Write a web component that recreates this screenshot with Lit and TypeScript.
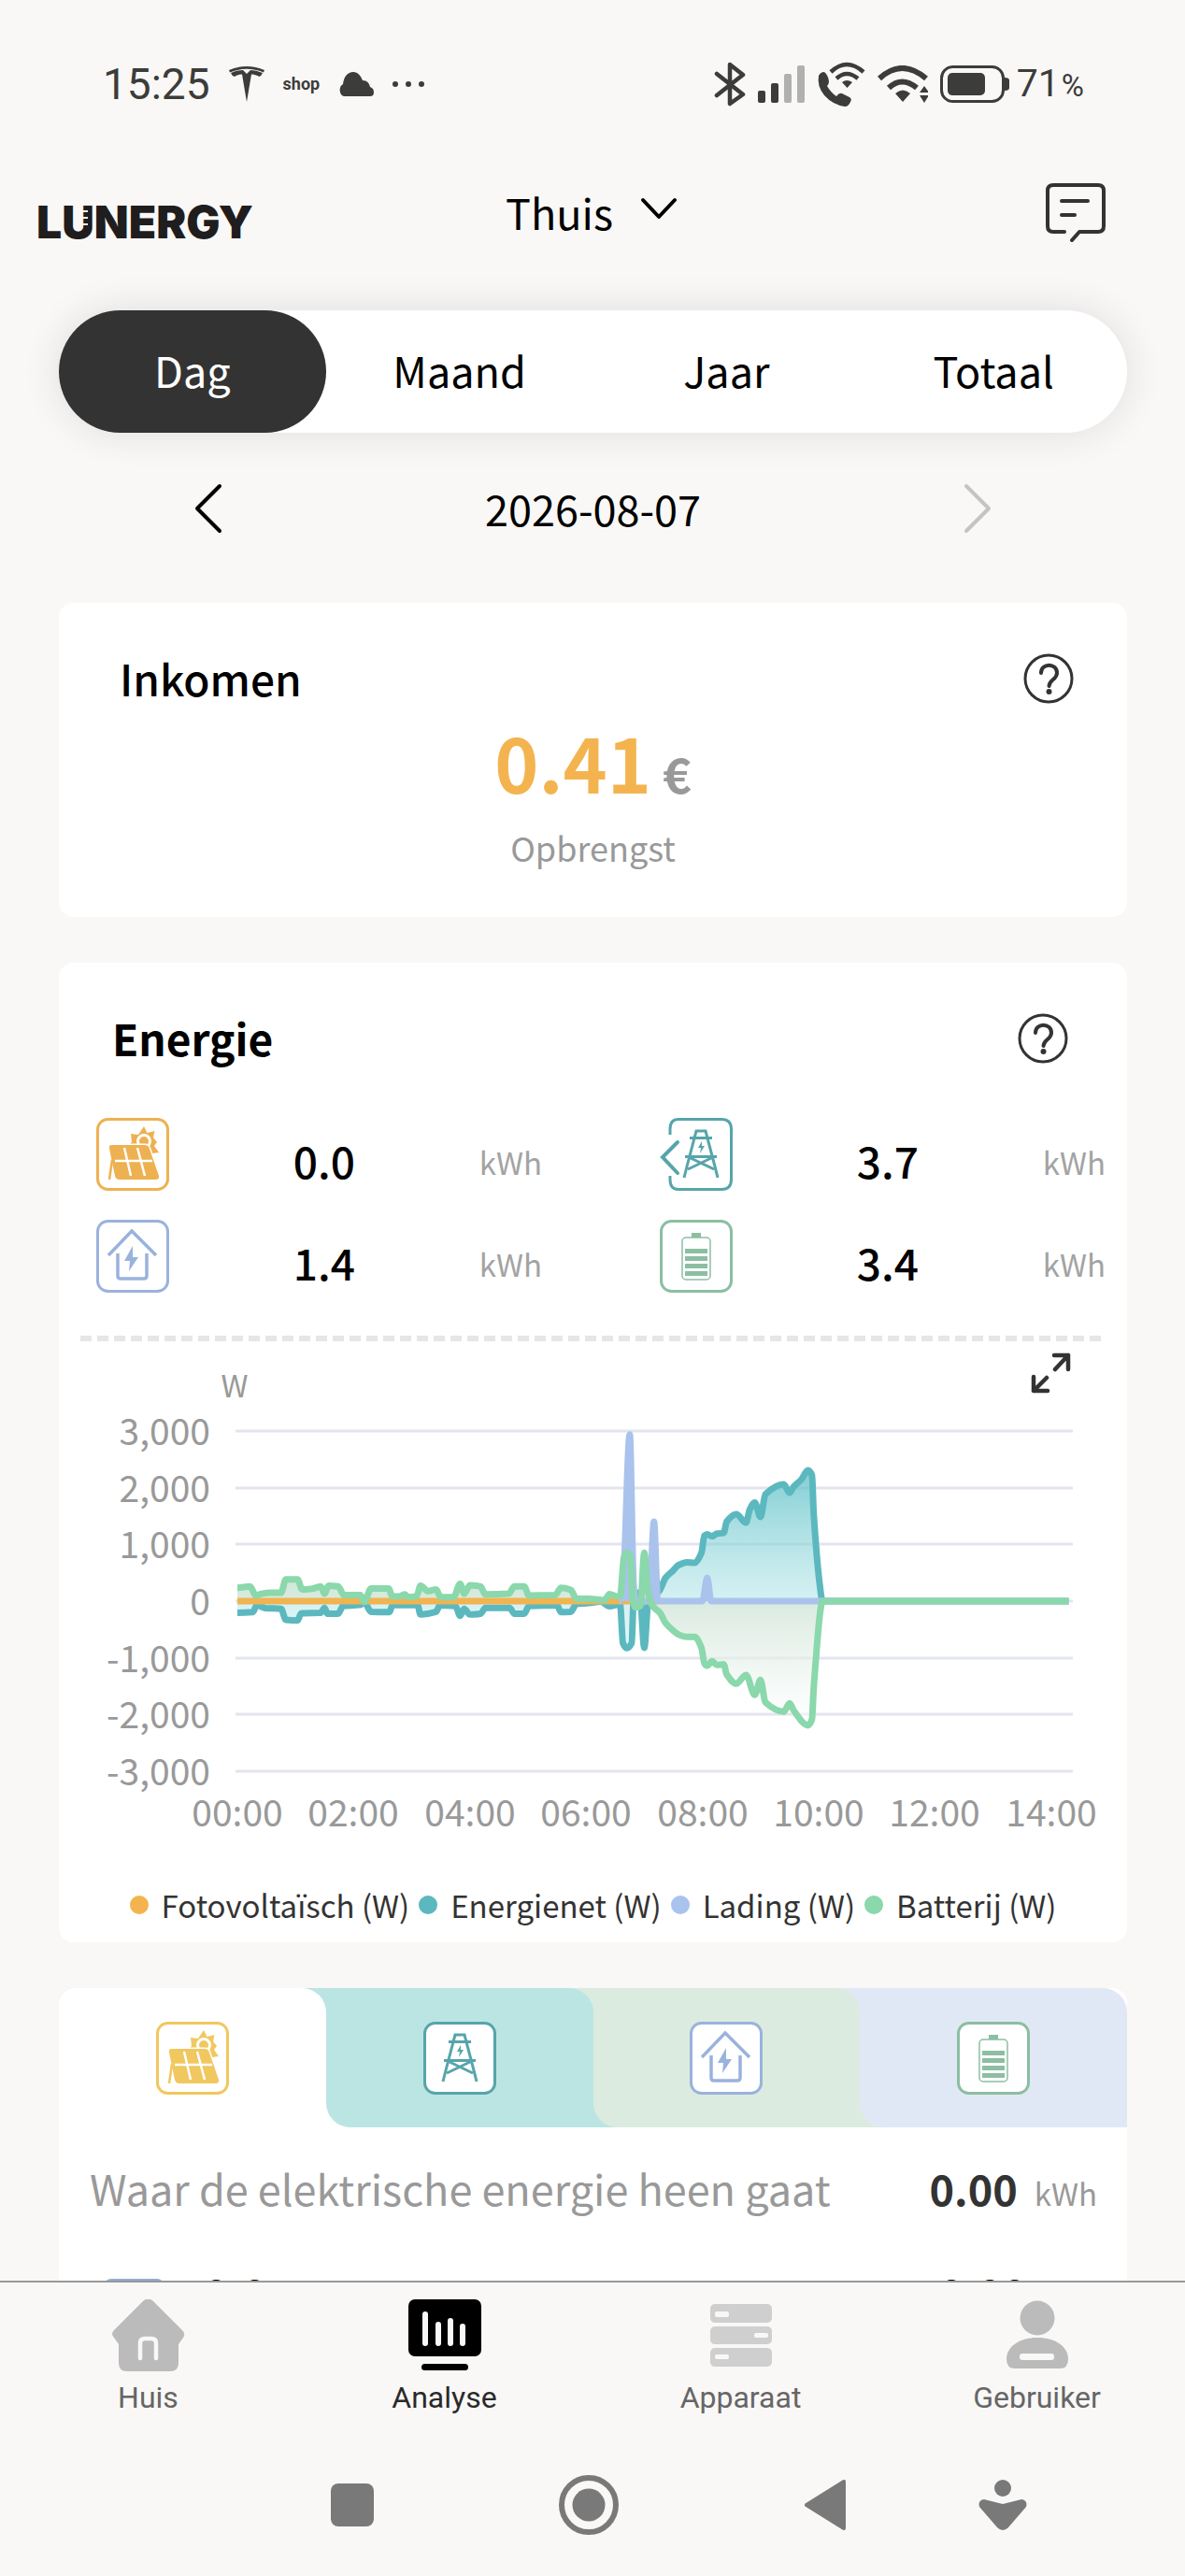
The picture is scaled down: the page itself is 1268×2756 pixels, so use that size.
import { LitElement, html, css, svg } from 'lit';
import { customElement, property, state } from 'lit/decorators.js';
import { classMap } from 'lit/directives/class-map.js';

type Point = [number, number];

// [minutes since midnight, watts]
const PV: Point[] = [[0, 0], [434, 0]];

const GRID: Point[] = [
  [0, -206], [16, -194], [20, -76], [29, -123], [45, -135], [50, -330], [62, -341], [66, -212],
  [86, -206], [90, -118], [93, -223], [104, -223], [109, -88], [127, -65], [131, -18], [138, -188],
  [157, -194], [160, -70], [186, -70], [189, -235], [205, -188], [209, -76], [225, -88], [230, -259],
  [234, -135], [240, -235], [251, -223], [256, -118], [281, -118], [286, -223], [296, -223],
  [301, -88], [330, -76], [334, -194], [344, -188], [350, -47], [363, -35], [375, -10], [384, -93],
  [395, -55], [398, -741], [402, -829], [407, -741], [409, 27], [413, 148], [416, 27], [420, -823],
  [424, -27], [429, 82], [436, 192], [442, 412], [450, 543], [455, 631], [464, 686], [472, 675],
  [479, 851], [482, 1153], [485, 1180], [490, 1142], [495, 1191], [502, 1202], [505, 1400],
  [515, 1532], [525, 1383], [529, 1620], [534, 1740], [540, 1482], [545, 1883], [564, 2059],
  [570, 1910], [574, 2015], [582, 2141], [589, 2306], [593, 2223], [595, 1510], [601, 302],
  [604, 0], [858, 0],
];

const LOAD: Point[] = [
  [394, 0], [398, 300], [405, 2937], [409, 300], [411, 0], [425, 0], [430, 1400], [434, 0],
  [480, 0], [485, 412], [489, 0], [858, 0],
];

const BATTERY: Point[] = [
  [0, 235], [13, 260], [19, 100], [25, 130], [34, 147], [45, 147], [50, 382], [62, 382], [67, 206],
  [77, 218], [86, 258], [90, 130], [94, 270], [104, 258], [110, 106], [127, 106], [131, -15],
  [138, 224], [156, 224], [160, 82], [167, 82], [173, 118], [176, 70], [185, 88], [189, 270],
  [197, 176], [205, 206], [210, 70], [223, 70], [230, 306], [234, 130], [240, 282], [251, 258],
  [256, 118], [280, 130], [286, 258], [296, 258], [301, 100], [328, 106], [334, 235], [344, 200],
  [350, 41], [363, 41], [379, 16], [384, 126], [392, 82], [395, 82], [399, 769], [402, 851],
  [406, 769], [408, 27], [411, -110], [416, -82], [420, 851], [424, 137], [429, -93], [436, -203],
  [442, -384], [450, -522], [455, -587], [464, -631], [472, -631], [479, -823], [482, -1098],
  [485, -1136], [490, -1060], [495, -1125], [502, -1114], [505, -1290], [515, -1455], [525, -1301],
  [534, -1652], [540, -1389], [545, -1784], [564, -1949], [570, -1800], [574, -1921], [589, -2190],
  [593, -2086], [595, -1510], [602, -137], [604, 0], [858, 0],
];

const ZERO_Y = 278;
const toX = (minutes: number) => 191 + minutes * 1.0367;
const toY = (watts: number) => ZERO_Y - watts * 0.0607;

// monotone cubic through the points, so peaks never overshoot
function smoothPath(data: Point[]) {
  const p = data.map(([m, w]) => [toX(m), toY(w)]);
  const slope = (i: number) => (p[i + 1][1] - p[i][1]) / (p[i + 1][0] - p[i][0]);
  const tangent = p.map((_, i) => {
    if (i === 0 || i === p.length - 1) return 0;
    const a = slope(i - 1);
    const b = slope(i);
    return a * b <= 0 ? 0 : (2 * a * b) / (a + b);
  });
  let d = `M${p[0][0].toFixed(1)},${p[0][1].toFixed(1)}`;
  for (let i = 1; i < p.length; i++) {
    const [x0, y0] = p[i - 1];
    const [x1, y1] = p[i];
    const h = (x1 - x0) / 3;
    d += `C${[x0 + h, y0 + tangent[i - 1] * h, x1 - h, y1 - tangent[i] * h, x1, y1]
      .map((n) => n.toFixed(1))
      .join(',')}`;
  }
  return d;
}

function areaPath(data: Point[]) {
  return `${smoothPath(data)}V${ZERO_Y}H${toX(data[0][0])}Z`;
}

const frame = svg`
  <rect x="1.5" y="1.5" width="75" height="75" rx="11" fill="#fff" stroke="currentColor" stroke-width="3"/>`;

const solarIcon = svg`
  ${frame}
  <path fill="currentColor" d="M51 9l3.5 7 8-2-1.500 7 4 5-3 4 5 7-7 1-26-8 4-4-1-9 8 1z"/>
  <circle cx="51" cy="25" r="6.500" fill="currentColor" stroke="#fff" stroke-width="3"/>
  <path fill="currentColor" stroke="#fff" stroke-width="3" paint-order="stroke" d="M17 29h35q4 0 5 4l10 29q1 4-4 4H25q-4 0-5-4l-6-29q-1-4 3-4z"/>
  <path stroke="#fff" stroke-width="2.500" fill="none" d="M20 46h40M30 32l7 30M44 32l8 30"/>
  <path stroke="currentColor" stroke-width="2.500" d="M17 45l-3 21"/>`;

const houseIcon = svg`
  ${frame}
  <path fill="none" stroke="currentColor" stroke-width="3.500" d="M13 38l25-26 26 26M23 36v24q0 3 3 3h25q3 0 3-3V36"/>
  <path fill="currentColor" d="M39 28l-9 16h6l-1 11 10-15h-6z"/>`;

const tower = svg`
  <path fill="none" stroke="currentColor" stroke-width="3" d="M21 64l3-12 10-38h10l10 38 3 12M27 21.500h24M22 41.500h34M28 43l25 12M50 43l-25 12"/>
  <path fill="currentColor" d="M40 25l-4 7h3l-1 6 5-8h-3z"/>`;

const towerIcon = svg`${frame}${tower}`;

const towerFeedIcon = svg`
  <path fill="none" stroke="currentColor" stroke-width="3" d="M11 18v-6q0-10.500 9-10.500h46q10.500 0 10.500 10.500v54q0 10.500-10.500 10.500H20q-9 0-9-10.500v-4"/>
  <path fill="none" stroke="currentColor" stroke-width="4" stroke-linecap="round" d="M19 26L3 42l16 17"/>
  <g transform="translate(5 0)">${tower}</g>`;

const batteryIcon = svg`
  ${frame}
  <rect x="24" y="19" width="30" height="45" rx="4" fill="none" stroke="currentColor" stroke-width="1.500"/>
  <path fill="currentColor" d="M34 14h10v5H34zM27 31h24v5H27zM27 39h24v5H27zM27 47h24v5H27zM27 55h24v5H27z"/>`;

const helpIcon = svg`
  <circle cx="27" cy="27" r="25" fill="none" stroke="#333" stroke-width="3"/>
  <path fill="none" stroke="#333" stroke-width="4" stroke-linecap="round" d="M19 21c0-11 17-11 17 0 0 7-8 7-8.500 14"/>
  <circle cx="27.500" cy="41" r="3" fill="#333"/>`;

@customElement('energy-chart')
export class EnergyChart extends LitElement {
  static styles = css`
    :host {
      display: block;
    }
    svg {
      display: block;
      width: 100%;
      height: auto;
    }
    text {
      font-family: "Noto Sans CJK SC", "Noto Sans", sans-serif;
      font-size: 39px;
      fill: #999;
    }
    .unit {
      font-size: 33px;
    }
    .line {
      fill: none;
      stroke-width: 7;
      stroke-linejoin: round;
    }
  `;

  render() {
    const levels = [3000, 2000, 1000, 0, -1000, -2000, -3000];
    const hours = [0, 2, 4, 6, 8, 10, 12, 14];
    return html`
      <svg viewBox="0 0 1143 531" role="img" aria-label="Vermogen per uur">
        <defs>
          <linearGradient id="grid-fill" x1="0" y1="0" x2="0" y2="1">
            <stop offset="0" stop-color="#58bec6" stop-opacity="0.75"/>
            <stop offset="0.75" stop-color="#a5e0e3" stop-opacity="0.45"/>
            <stop offset="1" stop-color="#c5f2f8" stop-opacity="0.5"/>
          </linearGradient>
          <linearGradient id="battery-fill" x1="0" y1="0" x2="0" y2="1">
            <stop offset="0" stop-color="#b5dcc6" stop-opacity="0.8"/>
            <stop offset="0.3" stop-color="#cfe4d7" stop-opacity="0.75"/>
            <stop offset="1" stop-color="#fff" stop-opacity="0.5"/>
          </linearGradient>
        </defs>
        <text class="unit" x="188" y="60" text-anchor="middle">W</text>
        ${levels.map((w) => svg`
          <path d="M189 ${Math.round(toY(w))}H1085" stroke="#e2e5ee" stroke-width="3"/>
          <text x="162" y="${Math.round(toY(w)) + 15}" text-anchor="end">${w.toLocaleString('en-US')}</text>`)}
        ${hours.map((h) => svg`
          <text x="${Math.round(toX(h * 60))}" y="519" text-anchor="middle">${String(h).padStart(2, '0')}:00</text>`)}
        <path fill="url(#grid-fill)" d="${areaPath(GRID)}"/>
        <path fill="url(#battery-fill)" d="${areaPath(BATTERY)}"/>
        <path class="line" stroke="#5cb8bf" d="${smoothPath(GRID)}"/>
        <path class="line" stroke="#f0b450" d="${smoothPath(PV)}"/>
        <path fill="#a9c3ec" d="${areaPath(LOAD)}"/>
        <path class="line" stroke="#a9c3ec" d="${smoothPath(LOAD)}"/>
        <path class="line" stroke="#8ad8ab" d="${smoothPath(BATTERY)}"/>
      </svg>
    `;
  }
}

@customElement('energy-stat')
export class EnergyStat extends LitElement {
  @property() value = '';
  @property() kind = '';

  static styles = css`
    :host {
      display: grid;
      grid-template-columns: 78px 1fr auto;
      height: 78px;
    }
    svg {
      width: 78px;
      height: 78px;
    }
    .pv { color: #eeb152; }
    .grid { color: #56a5aa; }
    .load { color: #9ab2dc; }
    .battery { color: #8cbea2; }
    b, span {
      padding-top: 12px;
      line-height: 66px;
    }
    b {
      font-size: 46px;
      font-weight: 500;
      text-align: center;
    }
    span {
      font-size: 33px;
      color: #a3a3a3;
      padding-top: 14px;
    }
  `;

  render() {
    const icons: Record<string, unknown> = {
      pv: solarIcon, grid: towerFeedIcon, load: houseIcon, battery: batteryIcon,
    };
    return html`
      <svg class=${this.kind} viewBox="0 0 78 78">${icons[this.kind]}</svg>
      <b>${this.value}</b>
      <span>kWh</span>
    `;
  }
}

@customElement('app-root')
export class AppRoot extends LitElement {
  @state() private period = 'Dag';
  @state() private page = 'Analyse';
  @state() private source = 'pv';

  static styles = css`
    * {
      box-sizing: border-box;
    }
    :host {
      display: flex;
      flex-direction: column;
      height: 100vh;
      overflow: hidden;
      background: #f9f8f6;
      color: #000;
      font-family: "Noto Sans CJK SC", "Noto Sans", sans-serif;
      font-size: 45px;
      line-height: 66px;
    }
    button, select {
      font: inherit;
      color: inherit;
      background: none;
      border: 0;
      padding: 0;
      margin: 0;
    }
    svg {
      display: block;
      flex: none;
    }
    h2 {
      margin: 0;
      font-size: 46px;
      font-weight: 500;
      line-height: 68px;
      padding-bottom: 2px;
    }

    /* phone status bar */
    .status {
      flex: none;
      display: flex;
      justify-content: space-between;
      height: 180px;
      padding: 0 108px 0 110px;
      font-family: Roboto, sans-serif;
      font-size: 46px;
      color: #3c3c3a;
    }
    .status div {
      display: flex;
      align-items: center;
      gap: 13px;
    }
    .status .left {
      gap: 20px;
    }
    .shop {
      font-size: 18px;
      font-weight: 700;
    }
    .charge {
      margin-left: -6px;
      font-size: 41px;
    }
    .charge small {
      font-size: 33px;
      margin-left: 2px;
    }

    header {
      flex: none;
      display: grid;
      grid-template-columns: 1fr auto 1fr;
      align-items: center;
      height: 94px;
    }
    .logo {
      position: relative;
      justify-self: start;
      margin-left: 39px;
      padding-top: 22px;
      font-family: Inter, sans-serif;
      font-size: 48px;
      font-weight: 900;
      line-height: 72px;
      color: #1f1d1e;
    }
    .logo::after {
      content: "";
      position: absolute;
      left: 45px;
      top: 45px;
      width: 10px;
      height: 16px;
      background: repeating-linear-gradient(#f9f8f6 0 2px, transparent 2px 7px);
    }
    .home {
      position: relative;
    }
    .home select {
      appearance: none;
      width: 186px;
      height: 66px;
    }
    .home svg {
      position: absolute;
      right: 2px;
      top: 17px;
      pointer-events: none;
    }
    .messages {
      justify-self: end;
      margin-right: 84px;
    }

    .periods {
      flex: none;
      display: grid;
      grid-template-columns: repeat(4, 1fr);
      height: 131px;
      margin: 58px 62px 0 63px;
      border-radius: 66px;
      background: #fff;
      box-shadow: 0 0 40px rgba(40, 30, 60, 0.12);
    }
    .periods button {
      border-radius: 66px;
      padding-bottom: 3px;
    }
    .periods .active {
      background: #333;
      color: #fff;
    }

    .date {
      flex: none;
      display: flex;
      align-items: center;
      justify-content: space-between;
      height: 162px;
      padding: 0 206px 0 207px;
      margin-bottom: 20px;
    }

    main {
      flex: 1;
      min-height: 0;
      overflow: hidden;
      padding: 0 62px 0 63px;
    }
    .card {
      background: #fff;
      border-radius: 16px;
      margin-bottom: 49px;
      overflow: hidden;
    }
    .title {
      display: flex;
      justify-content: space-between;
      align-items: center;
      padding: 46px 57px 0 65px;
    }
    .energy .title {
      padding: 46px 63px 0 57px;
    }
    .energy h2 {
      font-weight: 700;
    }
    .income {
      text-align: center;
      padding-bottom: 49px;
    }
    .amount {
      margin-top: 5px;
      font-size: 80px;
      font-weight: 700;
      line-height: 96px;
      color: #f3b44f;
    }
    .amount small {
      margin-left: 12px;
      font-size: 52px;
      line-height: 52px;
      color: #999;
    }
    .caption {
      margin-top: 18px;
      font-size: 36px;
      line-height: 52px;
      color: #999;
    }
    .stats {
      display: grid;
      grid-template-columns: 1fr 1fr;
      gap: 31px 126px;
      padding: 50px 23px 46px 40px;
    }
    .dashes {
      height: 6px;
      margin: 0 23px;
      background: repeating-linear-gradient(90deg, #e6e6e6 0 12px, transparent 12px 18px);
    }
    .chart {
      position: relative;
    }
    .expand {
      position: absolute;
      top: 12px;
      right: 60px;
    }
    .legend {
      display: flex;
      justify-content: center;
      gap: 10px;
      margin: 0;
      padding: 50px 0 18px;
      list-style: none;
      font-size: 33px;
      line-height: 44px;
      color: #333;
    }
    .legend li {
      display: flex;
      align-items: center;
      gap: 14px;
      white-space: nowrap;
    }
    .legend li::before {
      content: "";
      width: 20px;
      height: 20px;
      border-radius: 50%;
      background: var(--dot);
    }
    .dot-pv { --dot: #f3b44f; }
    .dot-grid { --dot: #5cb8bf; }
    .dot-load { --dot: #a9c3ec; }
    .dot-battery { --dot: #8ad8ab; }

    /* every tab shows its neighbours' colours behind its rounded corners */
    .sources {
      display: grid;
      grid-template-columns: repeat(4, 1fr);
      height: 149px;
    }
    .sources button {
      background: linear-gradient(var(--next) 50%, var(--prev) 50%);
    }
    .sources span {
      display: flex;
      align-items: center;
      justify-content: center;
      height: 100%;
      border-radius: 0 26px 0 26px;
      background: var(--own);
    }
    .sources .pv { --prev: #fff; --own: #fff; --next: #bbe5e3; color: #f1c75f; }
    .sources .grid { --prev: #fff; --own: #bbe5e3; --next: #dbebe0; color: #56a5aa; }
    .sources .load { --prev: #bbe5e3; --own: #dbebe0; --next: #e1e8f5; color: #9ab2dc; }
    .sources .battery { --prev: #dbebe0; --own: #e1e8f5; --next: #fff; color: #8cbea2; }

    .total {
      display: flex;
      align-items: baseline;
      padding: 32px 32px 0 33px;
      color: #999;
    }
    .total b {
      margin-left: auto;
      font-weight: 700;
      color: #333;
    }
    .total small {
      margin-left: 18px;
      font-size: 33px;
    }
    .split {
      display: flex;
      align-items: flex-start;
      padding: 59px 107px 0 48px;
      font-weight: 700;
      line-height: 30px;
    }
    .split i {
      width: 65px;
      height: 65px;
      border-radius: 8px;
      background: #93aad8;
    }
    .split span {
      margin-left: 42px;
    }
    .split span:last-child {
      margin-left: auto;
    }

    footer {
      flex: none;
      border-top: 2px solid #999;
      font-family: Roboto, sans-serif;
    }
    nav {
      display: grid;
      grid-template-columns: repeat(4, 1fr);
      padding-top: 18px;
    }
    nav a {
      display: flex;
      flex-direction: column;
      align-items: center;
      gap: 7px;
      font-size: 32px;
      line-height: 40px;
      color: #666;
      text-decoration: none;
    }
    nav .active {
      color: #2a2a2a;
    }
    .system {
      display: grid;
      grid-template-columns: 250fr 253fr 253fr 253fr 127fr 132fr;
      align-items: center;
      height: 153px;
      margin-top: 18px;
    }
    .system button {
      justify-self: center;
    }
    .system button:first-child {
      grid-column: 2;
    }
  `;

  private renderStatus() {
    return html`
      <div class="status">
        <div class="left">
          <span>15:25</span>
          <svg width="38" height="38" viewBox="0 0 38 38" fill="#3c3c3a">
            <path d="M0 4Q19-4 38 4l-1 2.500Q19-1 1 6.500z"/>
            <path d="M2 7Q9 4 15 4l4 4 4-4q6 0 13 3-1 3-4 4-2-2-8-2.500L19 38 14 8.500Q8 9 6 11 3 10 2 7z"/>
          </svg>
          <span class="shop">shop</span>
          <svg width="38" height="26" viewBox="0 0 38 26" fill="#3c3c3a">
            <path d="M6 26a6 7 0 01-1-13C6 5 10 0 16 0c5 0 8 4 10 9 5 0 7 3 8 7 3 1 4 3 4 6 0 3-2 4-4 4z"/>
          </svg>
          <svg width="34" height="8" viewBox="0 0 34 8" fill="#3c3c3a">
            <circle cx="3" cy="4" r="3"/><circle cx="17" cy="4" r="3"/><circle cx="31" cy="4" r="3"/>
          </svg>
        </div>
        <div>
          <svg width="34" height="48" viewBox="0 0 34 48" fill="none" stroke="#3c3c3a" stroke-width="4.500" stroke-linejoin="round" stroke-linecap="round">
            <path d="M3 13l28 22-14 10V3l14 11L3 36"/>
          </svg>
          <svg width="50" height="40" viewBox="0 0 50 40" fill="#3c3c3a">
            <rect y="27" width="8" height="13" rx="2"/><rect x="14" y="19" width="8" height="21" rx="2"/>
            <rect x="28" y="9" width="8" height="31" rx="2" fill="#b0b0ae"/><rect x="42" width="8" height="40" rx="2" fill="#b0b0ae"/>
          </svg>
          <svg width="52" height="48" viewBox="0 0 52 48">
            <path fill="#3c3c3a" d="M2 15q2-4 6-4 4 3 5 10 0 3-2 5 4 7 10 11 3-4 6-3l8 4q3 2 1 5-2 5-6 5Q17 46 8 36 0 26 2 15z"/>
            <path fill="none" stroke="#3c3c3a" stroke-width="4.500" d="M15 11q17-16 35 0M21 18q11-10 23 0"/>
            <path fill="#3c3c3a" d="M27 22q5-4 11 0l-5.500 6z"/>
          </svg>
          <svg width="54" height="40" viewBox="0 0 54 40">
            <path fill="none" stroke="#3c3c3a" stroke-width="6" d="M2 14Q26-8 52 14M12 24q14-13 30 0"/>
            <path fill="#3c3c3a" d="M19 30q8-7 16 0l-8 9zM45 29l5-7 5 7zM45 32l5 8 5-8z"/>
          </svg>
          <svg width="75" height="40" viewBox="0 0 75 40">
            <rect x="1.5" y="1.5" width="66" height="37" rx="12" fill="none" stroke="#3c3c3a" stroke-width="3"/>
            <rect x="8" y="8" width="40" height="24" rx="5" fill="#3c3c3a"/>
            <path fill="#3c3c3a" d="M69 13q5 0 5 3v8q0 3-5 3z"/>
          </svg>
          <span class="charge">71<small>%</small></span>
        </div>
      </div>
    `;
  }

  private renderHeader() {
    return html`
      <header>
        <span class="logo">LUNERGY</span>
        <label class="home">
          <select aria-label="Locatie"><option>Thuis</option></select>
          <svg width="40" height="24" viewBox="0 0 40 24" fill="none" stroke="#000" stroke-width="4" stroke-linecap="round" stroke-linejoin="round">
            <path d="M3 3l17 18L37 3"/>
          </svg>
        </label>
        <button class="messages" aria-label="Berichten">
          <svg width="66" height="64" viewBox="0 0 66 64" fill="none" stroke="#333" stroke-width="4" stroke-linecap="round" stroke-linejoin="round">
            <path d="M21 53H9q-6 0-6-6V9q0-6 6-6h48q6 0 6 6v38q0 6-6 6H37l-8 9M18 20h28M18 35h14"/>
          </svg>
        </button>
      </header>
    `;
  }

  private renderEnergy() {
    return html`
      <section class="card energy">
        <div class="title">
          <h2>Energie</h2>
          <button aria-label="Uitleg energie"><svg width="54" height="54" viewBox="0 0 54 54">${helpIcon}</svg></button>
        </div>
        <div class="stats">
          <energy-stat kind="pv" value="0.0"></energy-stat>
          <energy-stat kind="grid" value="3.7"></energy-stat>
          <energy-stat kind="load" value="1.4"></energy-stat>
          <energy-stat kind="battery" value="3.4"></energy-stat>
        </div>
        <div class="dashes"></div>
        <div class="chart">
          <energy-chart></energy-chart>
          <button class="expand" aria-label="Volledig scherm">
            <svg width="43" height="44" viewBox="0 0 43 44" fill="none" stroke="#333" stroke-width="4.500" stroke-linecap="round" stroke-linejoin="round">
              <path d="M25 3h15v15M40 3L26 18M3 26v15h15M3 41l14-14"/>
            </svg>
          </button>
        </div>
        <ul class="legend">
          <li class="dot-pv">Fotovoltaïsch (W)</li>
          <li class="dot-grid">Energienet (W)</li>
          <li class="dot-load">Lading (W)</li>
          <li class="dot-battery">Batterij (W)</li>
        </ul>
      </section>
    `;
  }

  private renderSources() {
    const tabs = [
      { id: 'pv', label: 'Fotovoltaïsch', icon: solarIcon },
      { id: 'grid', label: 'Energienet', icon: towerIcon },
      { id: 'load', label: 'Lading', icon: houseIcon },
      { id: 'battery', label: 'Batterij', icon: batteryIcon },
    ];
    return html`
      <section class="card">
        <div class="sources">
          ${tabs.map((tab) => html`
            <button class=${tab.id} aria-label=${tab.label} aria-pressed=${this.source === tab.id}
              @click=${() => (this.source = tab.id)}>
              <span><svg width="78" height="78" viewBox="0 0 78 78">${tab.icon}</svg></span>
            </button>`)}
        </div>
        <div class="total">Waar de elektrische energie heen gaat<b>0.00</b><small>kWh</small></div>
        <div class="split"><i></i><span>0.0</span><span>0.00</span></div>
      </section>
    `;
  }

  private renderFooter() {
    const pages = [
      {
        name: 'Huis',
        icon: svg`
          <path fill="#bbb" d="M33 2q5.500-5 11 0l31 31q4 4 1 8l-5 7v20q0 9-9 9H16q-9 0-9-9V48l-5-7q-4-4 0-8z"/>
          <path fill="none" stroke="#f9f8f6" stroke-width="4.500" stroke-linecap="round" d="M30 63V47q0-5 5-5h7q5 0 5 5v16"/>`,
      },
      {
        name: 'Analyse',
        icon: svg`
          <rect width="78" height="61" rx="7"/>
          <path stroke="#f9f8f6" stroke-width="6" stroke-linecap="round" d="M18 16v31M32 27v20M45 23v24M58 29v18"/>
          <rect x="14" y="69" width="50" height="7" rx="3.500"/>`,
      },
      {
        name: 'Apparaat',
        icon: svg`
          <g fill="#cfcfcf"><rect x="6" y="5" width="66" height="20" rx="5"/><rect x="6" y="29" width="66" height="19" rx="5"/><rect x="6" y="52" width="66" height="20" rx="5"/></g>
          <g fill="#f9f8f6"><rect x="11" y="13" width="15" height="6" rx="2"/><rect x="53" y="36" width="15" height="5" rx="2"/><rect x="11" y="59" width="15" height="5" rx="2"/></g>`,
      },
      {
        name: 'Gebruiker',
        icon: svg`
          <g fill="#bbb"><circle cx="39" cy="20" r="18.500"/><path d="M39 41c20 0 33 10 33 23q0 10-9 10H15q-9 0-9-10c0-13 13-23 33-23z"/></g>
          <rect x="20" y="58" width="37" height="7" rx="3" fill="#f9f8f6"/>`,
      },
    ];
    return html`
      <footer>
        <nav>
          ${pages.map((p) => html`
            <a href="#${p.name.toLowerCase()}" class=${classMap({ active: this.page === p.name })}
              @click=${() => (this.page = p.name)}>
              <svg width="78" height="78" viewBox="0 0 78 78">${p.icon}</svg>
              ${p.name}
            </a>`)}
        </nav>
        <div class="system">
          <button aria-label="Recente apps">
            <svg width="46" height="46" viewBox="0 0 46 46"><rect width="46" height="46" rx="8" fill="#797979"/></svg>
          </button>
          <button aria-label="Startscherm">
            <svg width="64" height="64" viewBox="0 0 64 64">
              <circle cx="32" cy="32" r="29" fill="none" stroke="#797979" stroke-width="6"/><circle cx="32" cy="32" r="17.500" fill="#797979"/>
            </svg>
          </button>
          <button aria-label="Terug">
            <svg width="44" height="54" viewBox="0 0 44 54" fill="#797979" stroke="#797979" stroke-width="4" stroke-linejoin="round">
              <path d="M42 2v50L2 27z"/>
            </svg>
          </button>
          <button aria-label="Toegankelijkheid">
            <svg width="52" height="54" viewBox="0 0 52 54" fill="#797979">
              <circle cx="26" cy="9" r="9"/>
              <path d="M6 21l20 5 20-5q7 1 5 8L32 51q-6 6-12 0L1 29q-2-7 5-8z"/>
            </svg>
          </button>
        </div>
      </footer>
    `;
  }

  render() {
    return html`
      ${this.renderStatus()}
      ${this.renderHeader()}
      <div class="periods">
        ${['Dag', 'Maand', 'Jaar', 'Totaal'].map((p) => html`
          <button class=${classMap({ active: this.period === p })} @click=${() => (this.period = p)}>${p}</button>`)}
      </div>
      <div class="date">
        <button aria-label="Vorige dag">
          <svg width="32" height="54" viewBox="0 0 32 54" fill="none" stroke="#000" stroke-width="4" stroke-linecap="round" stroke-linejoin="round">
            <path d="M28 3L4 27l24 24"/>
          </svg>
        </button>
        <span>2026-08-07</span>
        <button aria-label="Volgende dag" disabled>
          <svg width="32" height="54" viewBox="0 0 32 54" fill="none" stroke="#c4c4c4" stroke-width="4" stroke-linecap="round" stroke-linejoin="round">
            <path d="M4 3l24 24L4 51"/>
          </svg>
        </button>
      </div>
      <main>
        <section class="card income">
          <div class="title">
            <h2>Inkomen</h2>
            <button aria-label="Uitleg inkomen"><svg width="54" height="54" viewBox="0 0 54 54">${helpIcon}</svg></button>
          </div>
          <div class="amount">0.41<small>€</small></div>
          <div class="caption">Opbrengst</div>
        </section>
        ${this.renderEnergy()}
        ${this.renderSources()}
      </main>
      ${this.renderFooter()}
    `;
  }
}
